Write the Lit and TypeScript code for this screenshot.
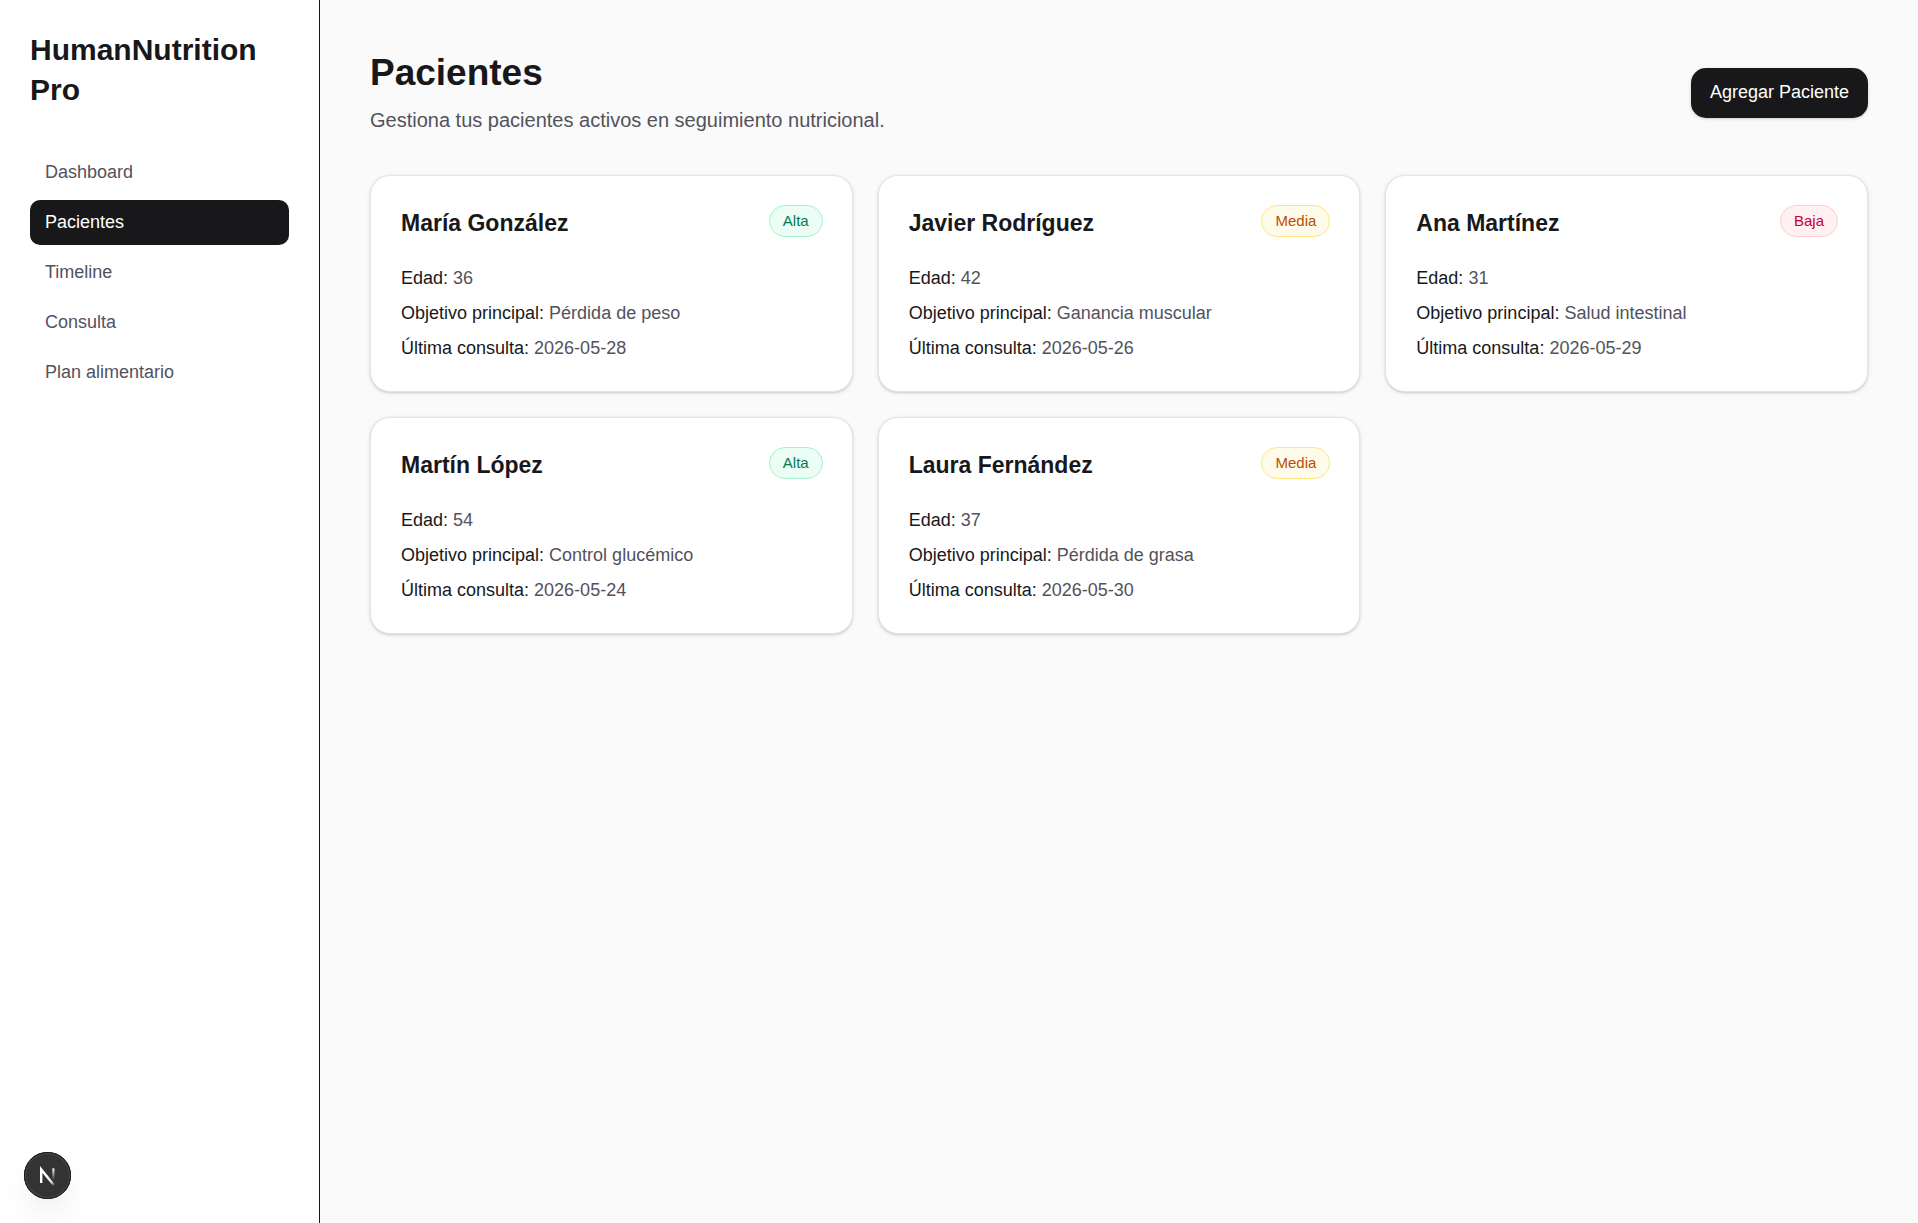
import { LitElement, html, css } from "lit";
import { customElement, property, state } from "lit/decorators.js";
import { classMap } from "lit/directives/class-map.js";

type Adherence = "Alta" | "Media" | "Baja";

interface Patient {
  name: string;
  age: number;
  goal: string;
  lastVisit: string;
  adherence: Adherence;
}

const PATIENTS: Patient[] = [
  { name: "María González", age: 36, goal: "Pérdida de peso", lastVisit: "2026-05-28", adherence: "Alta" },
  { name: "Javier Rodríguez", age: 42, goal: "Ganancia muscular", lastVisit: "2026-05-26", adherence: "Media" },
  { name: "Ana Martínez", age: 31, goal: "Salud intestinal", lastVisit: "2026-05-29", adherence: "Baja" },
  { name: "Martín López", age: 54, goal: "Control glucémico", lastVisit: "2026-05-24", adherence: "Alta" },
  { name: "Laura Fernández", age: 37, goal: "Pérdida de grasa", lastVisit: "2026-05-30", adherence: "Media" },
];

const SECTIONS = ["Dashboard", "Pacientes", "Timeline", "Consulta", "Plan alimentario"];

@customElement("patient-card")
export class PatientCard extends LitElement {
  @property({ attribute: false }) patient!: Patient;

  static styles = css`
    :host {
      display: block;
      box-sizing: border-box;
      padding: 29px 29px 30px 30px;
      border: 1px solid #e4e4e7;
      border-radius: 20px;
      background: #fff;
      box-shadow: 0 1px 4px rgba(0, 0, 0, 0.1), 0 1px 2px rgba(0, 0, 0, 0.1);
    }
    .head {
      display: flex;
      align-items: flex-start;
      justify-content: space-between;
      gap: 15px;
      margin-bottom: 25px;
    }
    h2 {
      margin: 0;
      font-size: 23px;
      line-height: 36px;
      font-weight: 700;
      color: #18181b;
    }
    .badge {
      flex: none;
      padding: 5px 13px;
      border: 1px solid;
      border-radius: 16px;
      font-size: 15px;
      line-height: 20px;
    }
    .alta {
      color: #007a55;
      background: #ecfdf5;
      border-color: #a4f4cf;
    }
    .media {
      color: #bb4d00;
      background: #fffbeb;
      border-color: #fee685;
    }
    .baja {
      color: #c70036;
      background: #fff1f2;
      border-color: #ffccd3;
    }
    dl {
      display: grid;
      gap: 10px;
      margin: 0;
      font-size: 18px;
      line-height: 25px;
    }
    dt,
    dd {
      display: inline;
      margin: 0;
    }
    dt {
      color: #18181b;
    }
    dd {
      color: #52525c;
    }
  `;

  render() {
    const p = this.patient;
    const tone = { badge: true, [p.adherence.toLowerCase()]: true };
    return html`
      <div class="head">
        <h2>${p.name}</h2>
        <span class=${classMap(tone)}>${p.adherence}</span>
      </div>
      <dl>
        <div><dt>Edad:</dt> <dd>${p.age}</dd></div>
        <div><dt>Objetivo principal:</dt> <dd>${p.goal}</dd></div>
        <div><dt>Última consulta:</dt> <dd>${p.lastVisit}</dd></div>
      </dl>
    `;
  }
}

@customElement("app-root")
export class AppRoot extends LitElement {
  @state() private current = "Pacientes";

  static styles = css`
    :host {
      display: flex;
      min-height: 100vh;
      background: #fafafa;
      color: #18181b;
      font-family: "Liberation Sans", Arial, Helvetica, sans-serif;
    }
    aside {
      box-sizing: border-box;
      flex: none;
      width: 320px;
      padding: 30px;
      border-right: 1px solid #18181b;
      background: #fff;
    }
    .brand {
      margin: 0 0 40px;
      font-size: 30px;
      line-height: 40px;
      font-weight: 700;
    }
    nav {
      display: flex;
      flex-direction: column;
      gap: 5px;
    }
    nav a {
      padding: 10px 15px;
      border-radius: 10px;
      font-size: 18px;
      line-height: 25px;
      color: #52525c;
      text-decoration: none;
    }
    nav a.active {
      background: #18181b;
      color: #fff;
    }
    main {
      flex: 1;
      min-width: 0;
      padding: 50px;
    }
    header {
      display: flex;
      align-items: center;
      justify-content: space-between;
      gap: 25px;
      margin-bottom: 40px;
    }
    h1 {
      margin: 0 0 10px;
      font-size: 37px;
      line-height: 45px;
      font-weight: 700;
    }
    header p {
      margin: 0;
      font-size: 20px;
      line-height: 30px;
      color: #52525c;
    }
    .add {
      flex: none;
      padding: 12px 19px 13px;
      border: 0;
      border-radius: 15px;
      background: #18181b;
      color: #fff;
      font: inherit;
      font-size: 18px;
      line-height: 25px;
      box-shadow: 0 1px 4px rgba(0, 0, 0, 0.1), 0 1px 2px rgba(0, 0, 0, 0.1);
    }
    .cards {
      display: grid;
      grid-template-columns: repeat(3, minmax(0, 1fr));
      gap: 25px;
    }
    .devtools {
      position: fixed;
      left: 24px;
      bottom: 24px;
      width: 47px;
      height: 47px;
      padding: 0;
      border: 0;
      border-radius: 50%;
      background: #333;
      box-shadow: inset 0 0 0 1px #171717, inset 0 0 0 2px #4b4b4b,
        0 16px 32px -8px rgba(0, 0, 0, 0.12);
    }
    .devtools svg {
      display: block;
      width: 47px;
      height: 47px;
    }
  `;

  render() {
    return html`
      <aside>
        <h2 class="brand">HumanNutrition Pro</h2>
        <nav>
          ${SECTIONS.map(
            (name) => html`<a
              href="#"
              class=${classMap({ active: name === this.current })}
              @click=${(e: Event) => {
                e.preventDefault();
                this.current = name;
              }}
              >${name}</a
            >`
          )}
        </nav>
      </aside>
      <main>
        <header>
          <div>
            <h1>Pacientes</h1>
            <p>Gestiona tus pacientes activos en seguimiento nutricional.</p>
          </div>
          <button class="add" type="button">Agregar Paciente</button>
        </header>
        <section class="cards">
          ${PATIENTS.map((p) => html`<patient-card .patient=${p}></patient-card>`)}
        </section>
      </main>
      <button class="devtools" type="button">
        <svg viewBox="0 0 47 47" fill="none" aria-hidden="true">
          <defs>
            <linearGradient id="diag" x1="25" y1="25" x2="31" y2="33" gradientUnits="userSpaceOnUse">
              <stop stop-color="#fff" />
              <stop offset="0.6" stop-color="#fff" stop-opacity="0.8" />
              <stop offset="1" stop-color="#fff" stop-opacity="0" />
            </linearGradient>
            <linearGradient id="stem" x1="30" y1="16" x2="30" y2="28" gradientUnits="userSpaceOnUse">
              <stop stop-color="#fff" />
              <stop offset="1" stop-color="#fff" stop-opacity="0" />
            </linearGradient>
          </defs>
          <path d="M17.2 31V17.4L30.2 33.6" stroke="url(#diag)" stroke-width="2.4" />
          <path d="M29.4 16.4V28" stroke="url(#stem)" stroke-width="2.2" />
        </svg>
      </button>
    `;
  }
}
